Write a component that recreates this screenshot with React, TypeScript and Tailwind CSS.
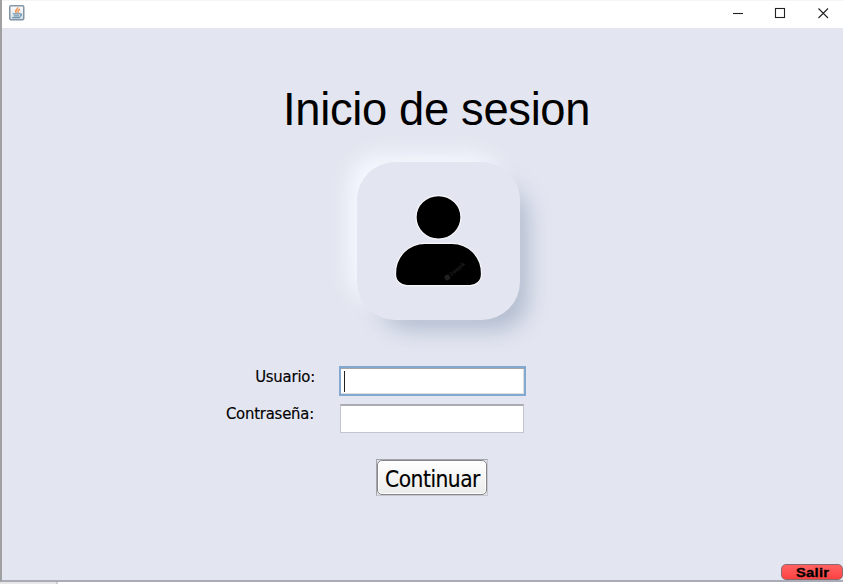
import React from "react";

function JavaIcon() {
  return (
    <svg width="16" height="16" viewBox="0 0 16 16" fill="none">
      <defs>
        <linearGradient id="tile" x1="0" y1="0" x2="0" y2="1">
          <stop offset="0" stopColor="#fdfdfe" />
          <stop offset="1" stopColor="#d3dde6" />
        </linearGradient>
      </defs>
      <rect x="0.75" y="0.75" width="14" height="14" rx="1.2" fill="url(#tile)" stroke="#8496a5" strokeWidth="1.5" />
      <path d="M8.8 2.2c.6 2-4 2.800-1.400 5.800M11 4.200c-2.600 1.200-2.400 2-1.600 3.800" stroke="#ee9450" strokeWidth="1.500" />
      <path d="M3.800 8.900h6.800M4.800 10.800h5.200M3.200 12.600h8" stroke="#7194ae" strokeWidth="1.300" />
      <path d="M10.600 8.800c2.600-.4 2.200 2.200 0 2.600" stroke="#5f87a6" strokeWidth="1.200" />
    </svg>
  );
}

function TitleBar() {
  return (
    <header className="flex h-7 shrink-0 items-start justify-between border-t border-[#f5f5f5] bg-white">
      <div className="pt-1 pl-[7px]">
        <JavaIcon />
      </div>
      <svg width="110" height="26" viewBox="733 1 110 26" fill="none" stroke="#222" strokeWidth="1.1">
        <path d="M733 13.5h10" />
        <rect x="775.5" y="8.5" width="9" height="9" />
        <path d="M818.5 8.5l9.5 9.5M828 8.5l-9.5 9.5" />
      </svg>
    </header>
  );
}

function Avatar() {
  return (
    <div className="mt-[26px] ml-[355px] h-[158px] w-[163px] rounded-[38px] bg-[#e3e5f0] shadow-[-13px_-12px_20px_-4px_#f4f8fe,16px_18px_22px_-12px_#b2bccf,14px_15px_24px_-6px_#ccd4e2]">
      <svg width="163" height="158" viewBox="357 162 163 158">
        <g stroke="#f6f7fb" strokeWidth="1.3">
          <ellipse cx="438.5" cy="217.3" rx="22.5" ry="21.8" />
          <path d="M425 243.3H452C469 243.3 481.5 257 481.5 273V274.500C481.500 281 476 285.700 470 285.700H407C401 285.700 395.500 281 395.500 274.500V273C395.500 257 408 243.300 425 243.300Z" />
        </g>
        <g transform="rotate(-40 455 271)">
          <circle cx="445" cy="271" r="2.8" fill="#202020" />
          <text x="449" y="273" className="fill-[#292929] font-['Liberation_Sans',sans-serif] text-[6px]">freepik</text>
        </g>
      </svg>
    </div>
  );
}

export default function App() {
  return (
    <div className="flex h-[584px] w-[843px] flex-col overflow-hidden bg-white text-black">
      <div className="flex h-[582px] shrink-0 flex-col border-b-2 border-l-2 border-b-[#a9abb5] border-l-[#a0a0a2] bg-[#e3e5f0]">
        <TitleBar />
        <main className="flex flex-1 flex-col">
          <h1 className="mt-[56px] ml-[281px] h-[52px] font-['Liberation_Sans',Arial,sans-serif] text-[45.3px] leading-[52px] tracking-[-0.32px] whitespace-nowrap">
            Inicio de sesion
          </h1>
          <Avatar />
          <div className="mt-[46px] flex font-['DejaVu_Sans_Condensed','DejaVu_Sans',sans-serif] text-[16.5px]">
            <div className="flex w-[313px] flex-col items-end text-right tracking-[-0.2px] [-webkit-text-stroke:0.15px_black]">
              <label className="leading-[22px]">Usuario:</label>
              <label className="mt-[15px] mr-px leading-[22px]">Contraseña:</label>
            </div>
            <div className="ml-[24px] flex flex-col">
              <div className="flex h-[30px] w-[187px] items-center border-2 border-[#83a9d1] bg-white pl-[3px] shadow-[inset_0_1px_0_#a5a5aa,inset_-1px_-1px_0_#dedede]">
                <span className="h-[21px] w-px bg-[#222]" />
              </div>
              <div className="mt-[8px] ml-px h-[29px] w-[184px] border border-t-2 border-[#c5c6cd] border-t-[#abacb2] bg-white" />
            </div>
          </div>
          <div className="mt-[26px] ml-[374px] h-[37px] w-[112px] border border-[#a5a6ab] border-r-[#c8c9d0] border-b-[#c8c9d0] bg-[#e1e2e8]">
            <button className="flex h-[35px] w-[110px] items-center justify-center rounded-[5px] border border-[#85868b] bg-linear-to-b from-white to-[#ebebeb] pt-[2px] pl-px font-['DejaVu_Sans_Condensed','DejaVu_Sans',sans-serif] text-[22.5px] leading-[26px] tracking-[-0.5px] shadow-[inset_0_0_0_1px_#fff] [-webkit-text-stroke:0.15px_black]">
              Continuar
            </button>
          </div>
          <button className="mt-auto ml-auto flex h-[16px] w-[62px] items-center justify-center rounded-[5px] border border-[#8d6970] bg-linear-to-b from-[#ff6262] to-[#ff4040] pl-[2px] font-['Liberation_Sans',Arial,sans-serif] text-[13px] leading-none font-black">
            <span className="inline-block scale-x-[1.14] tracking-[0.2px] [-webkit-text-stroke:0.35px_black]">Salir</span>
          </button>
        </main>
      </div>
      <div className="h-[2px] w-[58px] border-r-2 border-[#d0d0d0] bg-[#e8e8e8]" />
    </div>
  );
}
